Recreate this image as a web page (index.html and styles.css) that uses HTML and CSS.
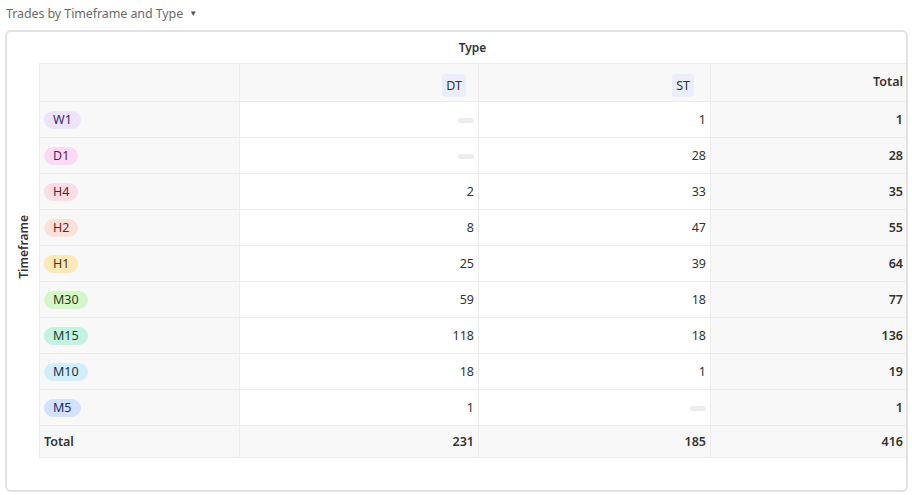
FILE: index.html
```html
<!DOCTYPE html>
<html>
<head>
<meta charset="utf-8">
<link rel="stylesheet" href="styles.css">
</head>
<body>
<div class="title">Trades by Timeframe and Type <span class="caret">▼</span></div>
<div class="widget">
  <div class="side"><span class="side-label">Timeframe</span></div>
  <div class="main">
    <div class="type-label">Type</div>
    <table class="pivot">
      <colgroup>
        <col class="c0"><col class="c1"><col class="c2"><col class="c3">
      </colgroup>
      <thead>
        <tr>
          <th class="rowhead"></th>
          <th class="num hc"><span class="hchip">DT</span></th>
          <th class="num hc hc2"><span class="hchip">ST</span></th>
          <th class="num total-col bold">Total</th>
        </tr>
      </thead>
      <tbody>
        <tr><td class="rowhead"><span class="chip w1">W1</span></td><td class="num"><span class="empty"></span></td><td class="num">1</td><td class="num total-col bold">1</td></tr>
        <tr><td class="rowhead"><span class="chip d1">D1</span></td><td class="num"><span class="empty"></span></td><td class="num">28</td><td class="num total-col bold">28</td></tr>
        <tr><td class="rowhead"><span class="chip h4">H4</span></td><td class="num">2</td><td class="num">33</td><td class="num total-col bold">35</td></tr>
        <tr><td class="rowhead"><span class="chip h2">H2</span></td><td class="num">8</td><td class="num">47</td><td class="num total-col bold">55</td></tr>
        <tr><td class="rowhead"><span class="chip h1">H1</span></td><td class="num">25</td><td class="num">39</td><td class="num total-col bold">64</td></tr>
        <tr><td class="rowhead"><span class="chip m30">M30</span></td><td class="num">59</td><td class="num">18</td><td class="num total-col bold">77</td></tr>
        <tr><td class="rowhead"><span class="chip m15">M15</span></td><td class="num">118</td><td class="num">18</td><td class="num total-col bold">136</td></tr>
        <tr><td class="rowhead"><span class="chip m10">M10</span></td><td class="num">18</td><td class="num">1</td><td class="num total-col bold">19</td></tr>
        <tr><td class="rowhead"><span class="chip m5">M5</span></td><td class="num">1</td><td class="num"><span class="empty"></span></td><td class="num total-col bold">1</td></tr>
      </tbody>
      <tfoot>
        <tr class="total-row"><td class="rowhead bold">Total</td><td class="num bold">231</td><td class="num bold">185</td><td class="num total-col bold">416</td></tr>
      </tfoot>
    </table>
  </div>
</div>
</body>
</html>
```
FILE: styles.css
```css
* { box-sizing: border-box; }
html, body { margin: 0; padding: 0; background: #fff; }
body {
  font-family: "Noto Sans", "Open Sans", sans-serif;
  color: #333;
  width: 912px;
  height: 495px;
  overflow: hidden;
}
.title {
  height: 30px;
  padding: 4px 0 0 6px;
  font-size: 12.5px;
  line-height: 18px;
  color: #6b6b6b;
  letter-spacing: -0.1px;
}
.caret {
  font-size: 8px;
  margin-left: 3px;
  vertical-align: 2px;
  color: #555;
}
.widget {
  margin: 0 4px 0 5px;
  height: 462px;
  border: 2px solid #e2e2e2;
  border-radius: 6px;
  display: flex;
  overflow: hidden;
}
.side {
  width: 32px;
  flex: none;
  display: flex;
  align-items: center;
  justify-content: center;
  padding-bottom: 28px;
}
.side-label {
  writing-mode: vertical-rl;
  transform: rotate(180deg);
  font-size: 12px;
  font-weight: 600;
  color: #333;
}
.main {
  flex: 1;
  min-width: 0;
}
.type-label {
  height: 31px;
  line-height: 31px;
  text-align: center;
  font-size: 12px;
  font-weight: 600;
  color: #333;
}
.pivot {
  border-collapse: collapse;
  table-layout: fixed;
  width: 870px;
  font-size: 12.5px;
}
.c0 { width: 200px; }
.c1 { width: 239px; }
.c2 { width: 232px; }
.c3 { width: 199px; }
.pivot th, .pivot td {
  border: 1px solid #ececec;
  padding: 0 4px;
  height: 36px;
  font-weight: normal;
}
.pivot thead th {
  height: 38px;
  background: #f8f8f8;
  vertical-align: middle;
}
.pivot thead th.hc { padding: 5px 12px 0 4px; }
.pivot thead th.hc2 { padding-right: 16px; }
.pivot thead th.total-col { padding-bottom: 3px; }
.rowhead {
  background: #f8f8f8;
  text-align: left;
  padding-left: 4px !important;
}
.num { text-align: right; }
.total-col { background: #f8f8f8; padding-right: 6px !important; }
.bold { font-weight: 600 !important; }
.total-row td {
  height: 32px;
  background: #f8f8f8;
}
.hchip {
  display: inline-block;
  background: #eaeef8;
  border-radius: 3px;
  padding: 3px 4px;
  line-height: 17px;
  color: #333;
}
.chip {
  display: inline-block;
  border-radius: 9px;
  padding: 0 9px;
  height: 18px;
  line-height: 18px;
  font-size: 12.5px;
}
.w1 { background: #ece3fb; color: #3a2760; }
.d1 { background: #fcdaf5; color: #5a1f4c; }
.h4 { background: #fddde5; color: #5c1f2d; }
.h2 { background: #fde1d9; color: #6b2618; }
.h1 { background: #fde9b7; color: #4a3509; }
.m30 { background: #d4f6c9; color: #1f3d16; }
.m15 { background: #c2f2e1; color: #153d31; }
.m10 { background: #d2eefc; color: #123246; }
.m5 { background: #d3e2fc; color: #1b2c50; }
.empty {
  display: inline-block;
  width: 16px;
  height: 5px;
  border-radius: 3px;
  background: #ececec;
  vertical-align: middle;
}
```
